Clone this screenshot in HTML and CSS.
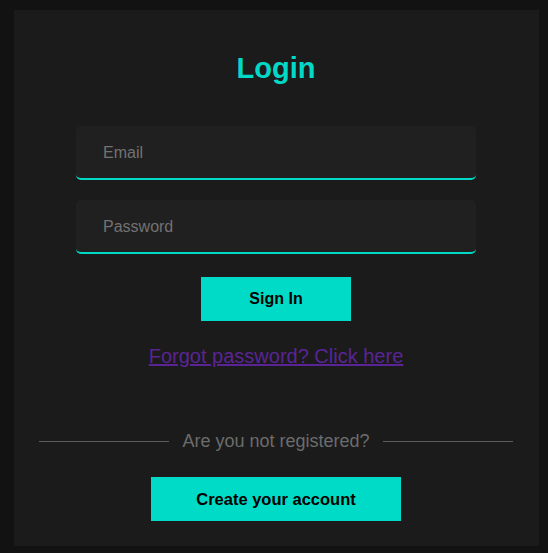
FILE: index.html
```html
<!DOCTYPE html>
<html lang="en">
<head>
<meta charset="utf-8">
<title>Login</title>
<link rel="stylesheet" href="styles.css">
</head>
<body>
  <main class="card">
    <h1 class="title">Login</h1>
    <form class="form" onsubmit="return false">
      <input class="field" type="email" placeholder="Email">
      <input class="field" type="password" placeholder="Password">
      <button class="btn btn-signin" type="submit">Sign In</button>
    </form>
    <a class="forgot" href="#">Forgot password? Click here</a>
    <div class="divider">
      <span class="divider-line"></span>
      <span class="divider-text">Are you not registered?</span>
      <span class="divider-line"></span>
    </div>
    <button class="btn btn-create" type="button">Create your account</button>
  </main>
</body>
</html>
```
FILE: styles.css
```css
* { box-sizing: border-box; }

html, body {
  margin: 0;
  background: #121212;
}

body {
  padding: 10px 9px 7px 14px;
  font-family: "Liberation Sans", Arial, sans-serif;
}

.card {
  background: #1b1b1b;
  height: 536px;
  padding: 41px 26px 25px 25px;
  display: flex;
  flex-direction: column;
  align-items: center;
}

.title {
  margin: 0;
  font-size: 29px;
  line-height: 34px;
  font-weight: 700;
  color: #00d9c6;
}

.form {
  margin-top: 41px;
  display: flex;
  flex-direction: column;
  align-items: center;
  width: 400px;
}

.field {
  width: 400px;
  height: 54px;
  margin: 0 0 20px;
  padding: 1px 25px 0 27px;
  background: #202020;
  border: none;
  border-bottom: 2px solid #00d9c6;
  border-radius: 5px;
  color: #cfcfcf;
  font-family: "Liberation Sans", Arial, sans-serif;
  font-size: 16px;
  outline: none;
}

.field::placeholder {
  color: #727272;
}

.field + .field {
  margin-bottom: 23px;
}

.btn {
  border: none;
  border-radius: 0;
  background: #00dbc7;
  color: #000;
  font-family: "Liberation Sans", Arial, sans-serif;
  font-size: 16px;
  font-weight: 700;
  height: 44px;
  cursor: pointer;
  padding: 0;
}

.btn-signin { width: 150px; }

.forgot {
  margin-top: 24px;
  font-size: 20px;
  line-height: 23px;
  color: #5a2496;
  text-decoration: underline;
}

.divider {
  margin-top: 63px;
  width: 100%;
  display: flex;
  align-items: center;
  gap: 13px;
}

.divider-line {
  flex: 1;
  height: 1px;
  background: #5c5c5c;
}

.divider-text {
  font-size: 18px;
  line-height: 21px;
  color: #6c6c6c;
}

.btn-create {
  margin-top: 25px;
  width: 250px;
  font-size: 16.5px;
}
```
